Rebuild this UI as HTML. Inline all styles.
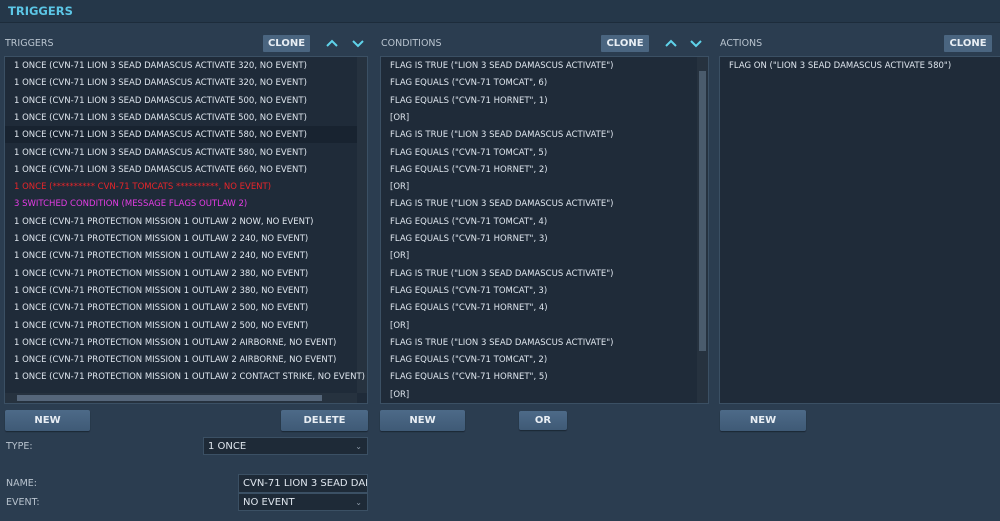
<!DOCTYPE html><html><head><style>
*{margin:0;padding:0;box-sizing:border-box}
body{width:1000px;height:521px;background:#2b3d50;font-family:"DejaVu Sans","Liberation Sans",sans-serif;color:#dfe6ee;position:relative;overflow:hidden;font-size:8.5px}
.a{position:absolute}
.hdr{left:0;top:0;width:1000px;height:23px;background:#253749;border-bottom:1px solid #1d2c3b}
.lbl{color:#b8c3ce;font-size:9.5px}
.btn{background:linear-gradient(#4d6a88,#3f5a76);border-radius:2px;color:#e8eef4;font-weight:bold;font-size:10px;text-align:center;line-height:21px;box-shadow:0 1px 1px #1a2633}
.clone{background:#4a6580;color:#e8eef4;font-weight:bold;font-size:10px;text-align:center;line-height:17px;border-radius:1px}
.list{background:#1f2b39;border:1px solid #3b5064}
.row{position:absolute;left:0;height:17.3px;line-height:18.5px;padding-left:9px;white-space:nowrap;overflow:hidden}
.sel{background:#1e2a37;border:1px solid #3b5064;color:#dfe6ee;font-size:10px;padding-left:4px;line-height:17px}
</style></head><body>
<div class="a hdr"></div>
<div class="a" style="left:8px;top:4px;color:#5cc6e6;font-weight:bold;font-size:11.5px">TRIGGERS</div>

<div class="a lbl" style="left:5px;top:38px">TRIGGERS</div>
<div class="a clone" style="left:263px;top:35px;width:47px;height:17px">CLONE</div>
<svg class="a" style="left:326px;top:38px" width="40" height="10"><path d="M1 8 L6 3 L11 8" stroke="#5fd3ea" stroke-width="2" fill="none"/><path d="M27 3 L32 8 L37 3" stroke="#5fd3ea" stroke-width="2" fill="none"/></svg>
<div class="a lbl" style="left:381px;top:38px">CONDITIONS</div>
<div class="a clone" style="left:601px;top:35px;width:48px;height:17px">CLONE</div>
<svg class="a" style="left:665px;top:38px" width="40" height="10"><path d="M1 8 L6 3 L11 8" stroke="#5fd3ea" stroke-width="2" fill="none"/><path d="M26 3 L31 8 L36 3" stroke="#5fd3ea" stroke-width="2" fill="none"/></svg>
<div class="a lbl" style="left:720px;top:38px">ACTIONS</div>
<div class="a clone" style="left:944px;top:35px;width:48px;height:17px">CLONE</div>

<div class="a list" style="left:4px;top:56px;width:364px;height:348px;overflow:hidden">
<div class="a" style="left:352px;top:0;width:10px;height:336px;background:#26323f"></div>
<div class="a" style="left:0;top:336px;width:352px;height:10px;background:#26323f"></div>
<div class="a" style="left:12px;top:338px;width:305px;height:6px;background:#55667a"></div>
<div class="a" style="left:0;top:69.2px;width:352px;height:17.3px;background:#182330"></div>
<div style="position:absolute;left:0;top:0;width:352px">
<div class="row" style="top:0">1 ONCE (CVN-71 LION 3 SEAD DAMASCUS ACTIVATE 320, NO EVENT)</div>
<div class="row" style="top:17.3px">1 ONCE (CVN-71 LION 3 SEAD DAMASCUS ACTIVATE 320, NO EVENT)</div>
<div class="row" style="top:34.6px">1 ONCE (CVN-71 LION 3 SEAD DAMASCUS ACTIVATE 500, NO EVENT)</div>
<div class="row" style="top:51.9px">1 ONCE (CVN-71 LION 3 SEAD DAMASCUS ACTIVATE 500, NO EVENT)</div>
<div class="row" style="top:69.2px">1 ONCE (CVN-71 LION 3 SEAD DAMASCUS ACTIVATE 580, NO EVENT)</div>
<div class="row" style="top:86.5px">1 ONCE (CVN-71 LION 3 SEAD DAMASCUS ACTIVATE 580, NO EVENT)</div>
<div class="row" style="top:103.8px">1 ONCE (CVN-71 LION 3 SEAD DAMASCUS ACTIVATE 660, NO EVENT)</div>
<div class="row" style="top:121.1px;color:#e8252a">1 ONCE (********** CVN-71 TOMCATS **********, NO EVENT)</div>
<div class="row" style="top:138.4px;color:#e43ce4">3 SWITCHED CONDITION (MESSAGE FLAGS OUTLAW 2)</div>
<div class="row" style="top:155.7px">1 ONCE (CVN-71 PROTECTION MISSION 1 OUTLAW 2 NOW, NO EVENT)</div>
<div class="row" style="top:173px">1 ONCE (CVN-71 PROTECTION MISSION 1 OUTLAW 2 240, NO EVENT)</div>
<div class="row" style="top:190.3px">1 ONCE (CVN-71 PROTECTION MISSION 1 OUTLAW 2 240, NO EVENT)</div>
<div class="row" style="top:207.6px">1 ONCE (CVN-71 PROTECTION MISSION 1 OUTLAW 2 380, NO EVENT)</div>
<div class="row" style="top:224.9px">1 ONCE (CVN-71 PROTECTION MISSION 1 OUTLAW 2 380, NO EVENT)</div>
<div class="row" style="top:242.2px">1 ONCE (CVN-71 PROTECTION MISSION 1 OUTLAW 2 500, NO EVENT)</div>
<div class="row" style="top:259.5px">1 ONCE (CVN-71 PROTECTION MISSION 1 OUTLAW 2 500, NO EVENT)</div>
<div class="row" style="top:276.8px">1 ONCE (CVN-71 PROTECTION MISSION 1 OUTLAW 2 AIRBORNE, NO EVENT)</div>
<div class="row" style="top:294.1px">1 ONCE (CVN-71 PROTECTION MISSION 1 OUTLAW 2 AIRBORNE, NO EVENT)</div>
<div class="row" style="top:311.4px">1 ONCE (CVN-71 PROTECTION MISSION 1 OUTLAW 2 CONTACT STRIKE, NO EVENT)</div>
</div></div>

<div class="a list" style="left:380px;top:56px;width:329px;height:348px;overflow:hidden">
<div class="a" style="left:316px;top:0;width:11px;height:346px;background:#26323f"></div>
<div class="a" style="left:318px;top:14px;width:7px;height:280px;background:#4a5b6c"></div>
<div style="position:absolute;left:0;top:0;width:316px">
<div class="row" style="top:0">FLAG IS TRUE ("LION 3 SEAD DAMASCUS ACTIVATE")</div>
<div class="row" style="top:17.3px">FLAG EQUALS ("CVN-71 TOMCAT", 6)</div>
<div class="row" style="top:34.6px">FLAG EQUALS ("CVN-71 HORNET", 1)</div>
<div class="row" style="top:51.9px">[OR]</div>
<div class="row" style="top:69.2px">FLAG IS TRUE ("LION 3 SEAD DAMASCUS ACTIVATE")</div>
<div class="row" style="top:86.5px">FLAG EQUALS ("CVN-71 TOMCAT", 5)</div>
<div class="row" style="top:103.8px">FLAG EQUALS ("CVN-71 HORNET", 2)</div>
<div class="row" style="top:121.1px">[OR]</div>
<div class="row" style="top:138.4px">FLAG IS TRUE ("LION 3 SEAD DAMASCUS ACTIVATE")</div>
<div class="row" style="top:155.7px">FLAG EQUALS ("CVN-71 TOMCAT", 4)</div>
<div class="row" style="top:173px">FLAG EQUALS ("CVN-71 HORNET", 3)</div>
<div class="row" style="top:190.3px">[OR]</div>
<div class="row" style="top:207.6px">FLAG IS TRUE ("LION 3 SEAD DAMASCUS ACTIVATE")</div>
<div class="row" style="top:224.9px">FLAG EQUALS ("CVN-71 TOMCAT", 3)</div>
<div class="row" style="top:242.2px">FLAG EQUALS ("CVN-71 HORNET", 4)</div>
<div class="row" style="top:259.5px">[OR]</div>
<div class="row" style="top:276.8px">FLAG IS TRUE ("LION 3 SEAD DAMASCUS ACTIVATE")</div>
<div class="row" style="top:294.1px">FLAG EQUALS ("CVN-71 TOMCAT", 2)</div>
<div class="row" style="top:311.4px">FLAG EQUALS ("CVN-71 HORNET", 5)</div>
<div class="row" style="top:328.7px">[OR]</div>
</div></div>

<div class="a list" style="left:719px;top:56px;width:290px;height:348px">
<div class="row" style="top:0">FLAG ON ("LION 3 SEAD DAMASCUS ACTIVATE 580")</div>
</div>

<div class="a btn" style="left:5px;top:410px;width:85px;height:21px">NEW</div>
<div class="a btn" style="left:281px;top:410px;width:87px;height:21px">DELETE</div>
<div class="a btn" style="left:380px;top:410px;width:85px;height:21px">NEW</div>
<div class="a btn" style="left:519px;top:411px;width:48px;height:19px;line-height:19px">OR</div>
<div class="a btn" style="left:720px;top:410px;width:86px;height:21px">NEW</div>

<div class="a lbl" style="left:6px;top:441px">TYPE:</div>
<div class="a sel" style="left:203px;top:437px;width:165px;height:18px">1 ONCE<span style="position:absolute;right:5px;color:#8d9aa8;font-size:8px">&#8964;</span></div>
<div class="a lbl" style="left:6px;top:478px">NAME:</div>
<div class="a sel" style="left:238px;top:474px;width:130px;height:19px;overflow:hidden;white-space:nowrap">CVN-71 LION 3 SEAD DAMASCUS</div>
<div class="a lbl" style="left:6px;top:497px">EVENT:</div>
<div class="a sel" style="left:238px;top:493px;width:130px;height:18px">NO EVENT<span style="position:absolute;right:5px;color:#8d9aa8;font-size:8px">&#8964;</span></div>
</body></html>
